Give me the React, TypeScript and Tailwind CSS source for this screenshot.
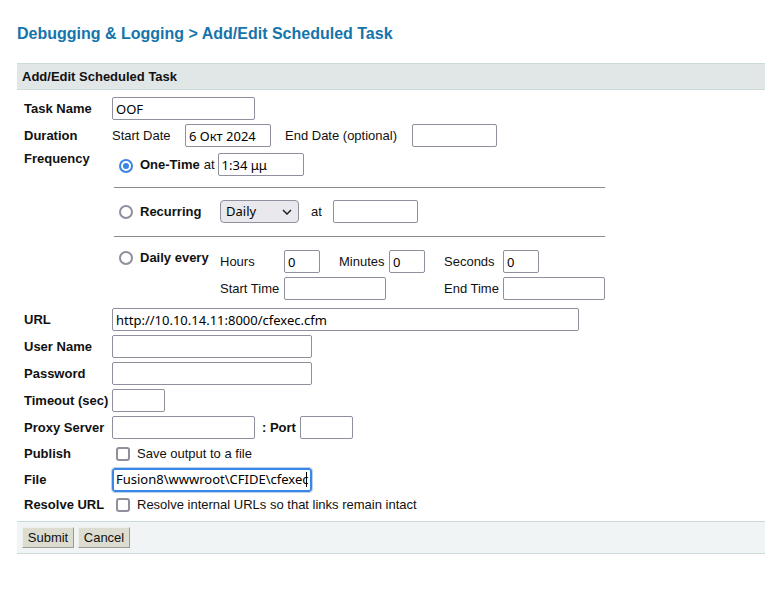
import React from 'react';

const inputFont = "[font-family:'Noto_Sans',sans-serif]";

const Field: React.FC<{ w: string; value?: string }> = ({ w, value }) => (
  <input
    defaultValue={value}
    className={`${w} h-[23px] border border-[#8f8f9d] rounded-[2px] bg-white px-[3px] text-[13px] text-black ${inputFont} outline-none`}
  />
);

const Radio: React.FC<{ checked?: boolean; extra?: string }> = ({ checked, extra = '' }) =>
  checked ? (
    <span className={`ml-[5px] mr-[7px] w-[14px] h-[14px] rounded-full border-2 border-[#3a84e2] bg-white flex items-center justify-center shrink-0 ${extra}`}>
      <span className="w-[6px] h-[6px] rounded-full bg-[#3a84e2]" />
    </span>
  ) : (
    <span className={`ml-[5px] mr-[7px] w-[14px] h-[14px] rounded-full border-2 border-[#8f8f9d] bg-white shrink-0 ${extra}`} />
  );

const Checkbox = () => (
  <span className="ml-[4px] mr-[7px] w-[14px] h-[14px] rounded-[3px] border-2 border-[#8f8f9d] bg-white shrink-0" />
);

const Row: React.FC<{ label: string; h?: string; children?: React.ReactNode }> = ({ label, h = 'h-[27px]', children }) => (
  <div className={`flex items-center ${h}`}>
    <div className="w-[88px] font-bold shrink-0">{label}</div>
    <div className="flex items-center">{children}</div>
  </div>
);

const btn =
  'w-[52px] h-[21px] bg-[#dcdcd0] border border-t-[#f0f0ea] border-l-[#f0f0ea] border-b-[#9a9a90] border-r-[#9a9a90] text-[13px] text-[#111]';

export default function App() {
  return (
    <div className="min-h-screen bg-white text-[13px] text-[#111] pl-[17px] [font-family:'Liberation_Sans',Arial,sans-serif]">
      <h1 className="pt-[25px] text-[16px] leading-[18px] font-bold text-[#1574ab]">
        Debugging &amp; Logging &gt; Add/Edit Scheduled Task
      </h1>

      <div className="mt-[20px] h-[27px] bg-[#e1e6e6] border-y border-[#cbdada] flex items-center px-[5px] font-bold">
        Add/Edit Scheduled Task
      </div>

      <div className="pl-[7px] pt-[5px]">
        <Row label="Task Name">
          <Field w="w-[143px]" value="OOF" />
        </Row>
        <Row label="Duration">
          <span className="w-[73px]">Start Date</span>
          <Field w="w-[86px]" value="6 Окт 2024" />
          <span className="ml-[14px] w-[127px]">End Date (optional)</span>
          <Field w="w-[85px]" />
        </Row>

        <div className="flex">
          <div className="w-[88px] font-bold shrink-0">Frequency</div>
          <div className="pt-[2px] pl-[2px] w-[493px] pb-[4px]">
            <div className="flex items-center h-[27px]">
              <Radio checked extra="mt-[2px]" />
              <span className="font-bold">One-Time</span>
              <span className="ml-[4px] mr-[3px]">at</span>
              <Field w="w-[86px]" value="1:34 μμ" />
            </div>
            <div className="mt-[9px] mb-[10px] h-px bg-[#8a8a8a]" />
            <div className="flex items-center h-[27px]">
              <Radio extra="mt-[1px]" />
              <span className="font-bold w-[80px]">Recurring</span>
              <div className={`w-[79px] h-[23px] rounded-[4px] border border-[#8f8f9d] bg-[#e9e9ed] flex items-center justify-between pl-[5px] pr-[6px] ${inputFont} text-[13px] text-black`}>
                Daily
                <svg width="10" height="6" viewBox="0 0 10 6" fill="none">
                  <path d="M1 1l4 4 4-4" stroke="#222" strokeWidth="1.5" />
                </svg>
              </div>
              <span className="ml-[12px] w-[22px]">at</span>
              <Field w="w-[85px]" />
            </div>
            <div className="mt-[11px] mb-[11px] h-px bg-[#8a8a8a]" />
            <div className="flex items-start">
              <div className="flex items-start w-[106px]">
                <Radio extra="mt-[3px]" />
                <span className="font-bold">Daily every</span>
              </div>
              <div>
                <div className="flex items-center h-[27px]">
                  <span className="w-[64px]">Hours</span>
                  <span className="w-[55px]"><Field w="w-[36px]" value="0" /></span>
                  <span className="w-[50px]">Minutes</span>
                  <span className="w-[55px]"><Field w="w-[36px]" value="0" /></span>
                  <span className="w-[59px]">Seconds</span>
                  <Field w="w-[36px]" value="0" />
                </div>
                <div className="flex items-center h-[27px]">
                  <span className="w-[64px]">Start Time</span>
                  <span className="w-[160px]"><Field w="w-[102px]" /></span>
                  <span className="w-[59px]">End Time</span>
                  <Field w="w-[102px]" />
                </div>
              </div>
            </div>
          </div>
        </div>

        <Row label="URL">
          <Field w="w-[467px]" value="http://10.10.14.11:8000/cfexec.cfm" />
        </Row>
        <Row label="User Name">
          <Field w="w-[200px]" />
        </Row>
        <Row label="Password">
          <Field w="w-[200px]" />
        </Row>
        <Row label="Timeout (sec)">
          <Field w="w-[53px]" />
        </Row>
        <Row label="Proxy Server">
          <Field w="w-[143px]" />
          <span className="ml-[7px] mr-[4px] font-bold">: Port</span>
          <Field w="w-[53px]" />
        </Row>
        <Row label="Publish" h="h-[26px]">
          <Checkbox />
          <span>Save output to a file</span>
        </Row>
        <Row label="File" h="h-[25px]">
          <div className={`w-[200px] h-[24px] rounded-[3px] border-2 border-[#3b85e6] outline outline-1 outline-[#b9d3f3] bg-white px-[2px] flex items-center overflow-hidden whitespace-nowrap ${inputFont} text-[13px] text-black`}>
            <span>Fusion8\wwwroot\CFIDE\cfexec</span>
            <span className="w-px h-[15px] bg-black -ml-[2px]" />
          </div>
        </Row>
        <Row label="Resolve URL" h="h-[26px]">
          <Checkbox />
          <span>Resolve internal URLs so that links remain intact</span>
        </Row>
      </div>

      <div className="mt-[3px] h-[33px] bg-[#f1f4f4] border-y border-[#cbdada] flex items-center gap-[4px] px-[5px]">
        <button className={btn}>Submit</button>
        <button className={btn}>Cancel</button>
      </div>
    </div>
  );
}
